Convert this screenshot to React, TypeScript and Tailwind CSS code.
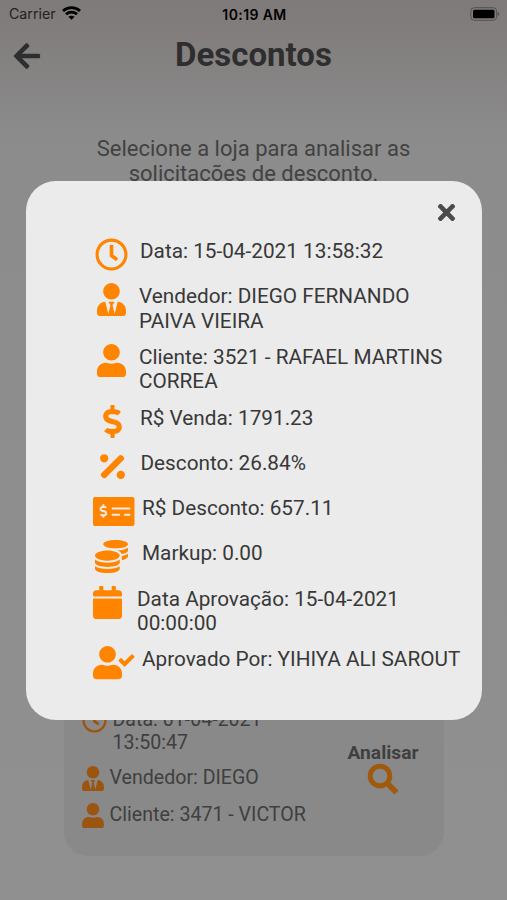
import React from "react";
import {
  FaArrowLeft,
  FaCalendar,
  FaCoins,
  FaDollarSign,
  FaMoneyCheckAlt,
  FaPercentage,
  FaRegClock,
  FaTimes,
  FaUser,
  FaUserCheck,
  FaUserTie,
} from "react-icons/fa";
import type { IconType } from "react-icons";

type Detail = { icon: IconType; inset: string; size: string; gap: string; lines: string[] };

const details: Detail[] = [
  { icon: FaRegClock, inset: "pl-[69px]", size: "w-[33px]", gap: "ml-[12px]", lines: ["Data: 15-04-2021 13:58:32"] },
  { icon: FaUserTie, inset: "pl-[71px]", size: "w-[29px]", gap: "ml-[13px]", lines: ["Vendedor: DIEGO FERNANDO", "PAIVA VIEIRA"] },
  { icon: FaUser, inset: "pl-[71px]", size: "w-[29px]", gap: "ml-[13px]", lines: ["Cliente: 3521 - RAFAEL MARTINS", "CORREA"] },
  { icon: FaDollarSign, inset: "pl-[77px]", size: "w-[19px]", gap: "ml-[18px]", lines: ["R$ Venda: 1791.23"] },
  { icon: FaPercentage, inset: "pl-[74px]", size: "w-[25px]", gap: "ml-[15.5px]", lines: ["Desconto: 26.84%"] },
  { icon: FaMoneyCheckAlt, inset: "pl-[67px]", size: "w-[41.5px]", gap: "ml-[7.5px]", lines: ["R$ Desconto: 657.11"] },
  { icon: FaCoins, inset: "pl-[69px]", size: "w-[33px]", gap: "ml-[14px]", lines: ["Markup: 0.00"] },
  { icon: FaCalendar, inset: "pl-[67px]", size: "w-[29px]", gap: "ml-[15px]", lines: ["Data Aprovação: 15-04-2021", "00:00:00"] },
  { icon: FaUserCheck, inset: "pl-[67px]", size: "w-[41.5px]", gap: "ml-[7.5px]", lines: ["Aprovado Por: YIHIYA ALI SAROUT"] },
];

function StatusBar() {
  return (
    <div className="grid h-[28px] grid-cols-3 items-center pl-[9px] pr-[7px] text-black font-['Inter',sans-serif]">
      <div className="flex items-center gap-[6px] text-[14.2px] text-[#222]">
        <span>Carrier</span>
        <svg className="mt-[-2px]" width="19" height="14" viewBox="0 0 19 14" fill="none" stroke="#000" strokeWidth="2.8">
          <path d="M1 5C5.8.5 13.2.5 18 5" />
          <path d="M4 8.3c3.1-2.8 7.9-2.8 11 0" />
          <path d="M6.4 10.8c1.8-1.5 4.4-1.5 6.2 0L9.5 13.8Z" fill="#000" stroke="none" />
        </svg>
      </div>
      <span className="text-center text-[14px] font-semibold tracking-[0.4px] whitespace-nowrap">10:19 AM</span>
      <svg className="mt-[-1px] justify-self-end" width="31" height="14" viewBox="0 0 31 14">
        <rect x="1.8" y=".7" width="25.8" height="12.6" rx="3.5" fill="none" stroke="#555151" />
        <rect x="4" y="2.7" width="21.5" height="8.6" rx="1.5" fill="#000" />
        <path d="M28.6 4.8c2.2.8 2.2 3.6 0 4.4Z" fill="#555151" />
      </svg>
    </div>
  );
}

function RequestCard() {
  return (
    <section className="mx-auto mb-[44px] flex w-[380px] rounded-[24px] bg-[#898989] pt-[40px] pb-[28px] pl-[18px] text-[19.6px] leading-[23px] text-[#3f3f3f]">
      <div className="flex w-[250px] flex-col gap-[12px]">
        <div className="flex">
          <FaRegClock className="mt-[-1px] size-[25px] shrink-0 text-[#9c5510]" />
          <p className="mt-[-1px] ml-[6px]">
            Data: 01-04-2021
            <br />
            13:50:47
          </p>
        </div>
        <div className="flex h-[25px]">
          <FaUserTie className="h-[25px] w-[22px] shrink-0 text-[#9c5510]" />
          <p className="ml-[6px] whitespace-nowrap">Vendedor: DIEGO</p>
        </div>
        <div className="flex h-[25px]">
          <FaUser className="h-[25px] w-[22px] shrink-0 text-[#9c5510]" />
          <p className="ml-[6px] whitespace-nowrap">Cliente: 3471 - VICTOR</p>
        </div>
      </div>
      <div className="ml-[14px] flex w-[75px] flex-col items-center pt-[32px]">
        <span className="text-[19.2px] font-bold">Analisar</span>
        <svg className="mt-[-1px]" width="32" height="32" viewBox="0 0 32 32" fill="none" stroke="#a05a10" strokeWidth="5">
          <circle cx="13" cy="13" r="9.8" />
          <path d="M19.5 19.5l10 10" strokeWidth="5.6" />
        </svg>
      </div>
    </section>
  );
}

function DetailsModal() {
  return (
    <div className="absolute top-[181px] left-[26px] h-[539px] w-[456px] rounded-[30px] bg-[#ebebeb] text-[#383838]">
      <div className="flex h-[57px] justify-end pt-[19px] pr-[23px]">
        <FaTimes size={25} className="text-[#4b4b4b]" />
      </div>
      <div className="flex flex-col gap-[12px]">
        {details.map(({ icon: Icon, inset, size, gap, lines }) => (
          <div key={lines[0]} className={`flex items-start ${inset}`}>
            <Icon className={`h-[33.2px] shrink-0 text-[#ff8400] ${size}`} />
            <p className={`-mb-px pt-px text-[20.75px] leading-[24.42px] whitespace-nowrap ${gap}`}>
              {lines.map((line) => (
                <span key={line} className="block">{line}</span>
              ))}
            </p>
          </div>
        ))}
      </div>
    </div>
  );
}

export default function App() {
  return (
    <main className="relative flex h-[900px] w-[507px] flex-col overflow-hidden bg-linear-to-b from-[#7e7a79] via-[#8c8c8c] via-[16%] to-[#909090] font-['Roboto',sans-serif]">
      <StatusBar />
      <header className="relative flex h-[52px] items-center justify-center">
        <FaArrowLeft size={30} className="absolute top-[13px] left-[12px] text-[#2f2e2f]" />
        <h1 className="pt-[2px] text-[33px] leading-[40px] font-bold text-[#2f2e2f]">Descontos</h1>
      </header>
      <p className="mt-[56px] text-center text-[22px] leading-[25px] text-[#424242]">
        Selecione a loja para analisar as
        <br />
        solicitações de desconto.
      </p>
      <div className="mt-auto">
        <RequestCard />
      </div>
      <DetailsModal />
    </main>
  );
}
